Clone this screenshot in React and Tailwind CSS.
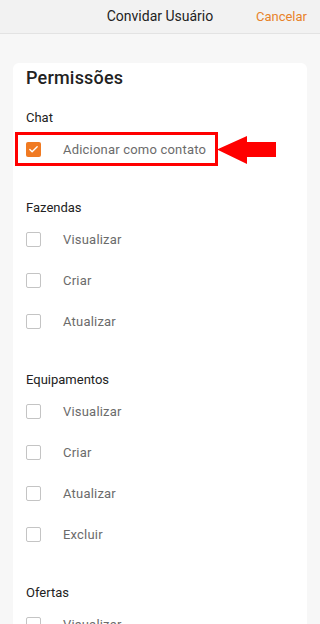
import { Check } from "lucide-react";

const sections = [
  { title: "Fazendas", items: ["Visualizar", "Criar", "Atualizar"] },
  { title: "Equipamentos", items: ["Visualizar", "Criar", "Atualizar", "Excluir"] },
  { title: "Ofertas", items: ["Visualizar", "Criar", "Atualizar", "Excluir"] },
];

function Row({ label, checked }) {
  return (
    <div className="flex h-[41px] items-center">
      {checked ? (
        <span className="flex h-[15px] w-[15px] items-center justify-center rounded-[2px] bg-[#f07a22]">
          <Check size={11} strokeWidth={3} className="text-white" />
        </span>
      ) : (
        <span className="h-[15px] w-[15px] rounded-[2px] border border-[#c4c4c4] bg-white" />
      )}
      <span className="ml-[22px] text-[13px] tracking-[0.2px] text-[#6b6b6b]">{label}</span>
    </div>
  );
}

function Section({ title, children }) {
  return (
    <div className="mt-[27px]">
      <p className="h-[22px] text-[13px] leading-[22px] text-[#222]">{title}</p>
      {children}
    </div>
  );
}

export default function App() {
  return (
    <div className="min-h-screen bg-[#f7f7f7] font-['Roboto',sans-serif]">
      <header className="relative flex h-[34px] items-center justify-center border-b border-[#e3e3e3] bg-[#f2f2f2]">
        <h1 className="text-[14px] text-[#222]">Convidar Usuário</h1>
        <button className="absolute right-[13px] text-[13px] text-[#e8822a]">Cancelar</button>
      </header>

      <div className="px-[13px] pt-[29px] pb-10">
        <div className="rounded-[6px] bg-white px-[13px] pt-[1px] pb-6">
          <h2 className="text-[18px] font-medium leading-[28px] tracking-[0.2px] text-[#222]">Permissões</h2>

          <div className="mt-[15px]">
            <p className="h-[22px] text-[13px] leading-[22px] text-[#222]">Chat</p>
            <div className="relative">
              <Row label="Adicionar como contato" checked />
              {/* destaque vermelho */}
              <div className="pointer-events-none absolute left-[-11px] top-[3px] h-[34px] w-[203px] border-[3px] border-[#ff0000]" />
              <svg
                className="absolute left-[191px] top-[6px]"
                width="60"
                height="30"
                viewBox="0 0 60 30"
              >
                <polygon points="0,14.5 30,1 30,7 59,7 59,22 30,22 30,29" fill="#ff0000" />
              </svg>
            </div>
          </div>

          {sections.map(s => (
            <Section key={s.title} title={s.title}>
              {s.items.map(it => (
                <Row key={it} label={it} />
              ))}
            </Section>
          ))}
        </div>
      </div>
    </div>
  );
}
